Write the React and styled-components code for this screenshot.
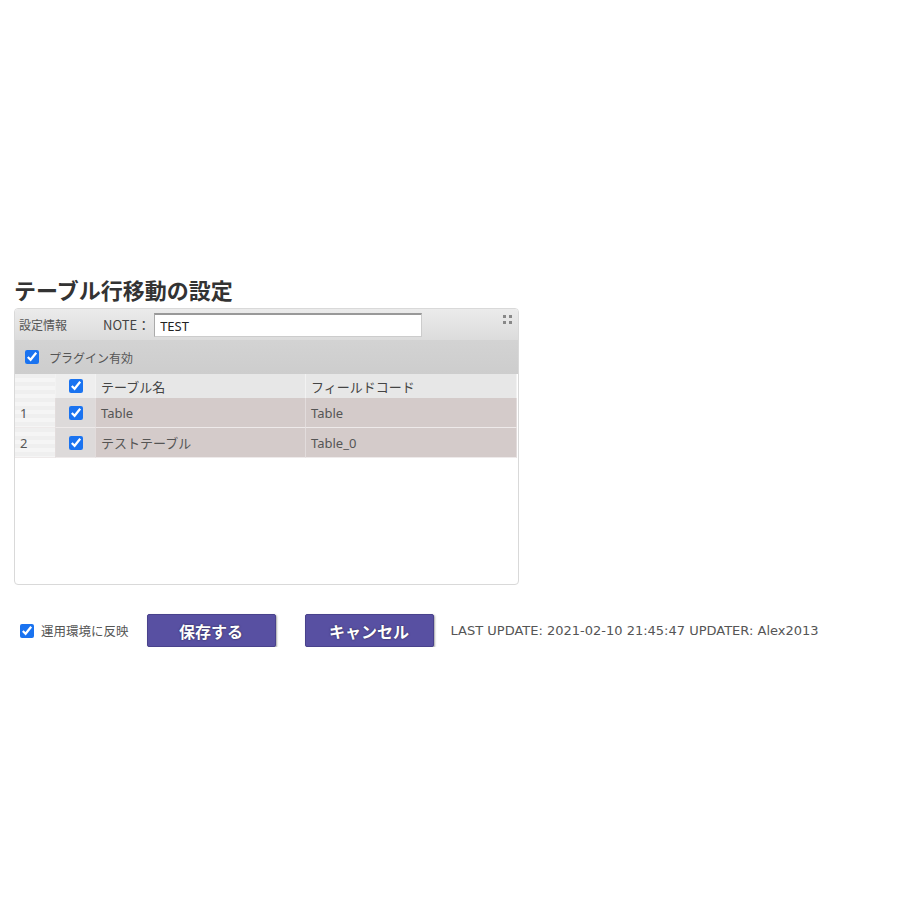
import React from "react";
import styled, { createGlobalStyle } from "styled-components";

const Global = createGlobalStyle`
  html, body { margin: 0; padding: 0; background: #fff; }
  body { font-family: "Noto Sans", "Noto Sans CJK JP", sans-serif; color: #444; }
`;

const Page = styled.div`
  padding: 276px 14px 0 14px;
`;

const Title = styled.h1`
  margin: 0;
  height: 32px;
  line-height: 26px;
  font-size: 22px;
  font-weight: 700;
  color: #333;
  font-family: "Noto Sans CJK JP", sans-serif;
`;

const Panel = styled.div`
  position: relative;
  width: 503px;
  height: 275px;
  border: 1px solid #d9d9d9;
  border-radius: 4px;
  overflow: hidden;
  background: #fff;
`;

const HeaderBar = styled.div`
  display: flex;
  align-items: center;
  height: 31px;
  padding-left: 4px;
  background: linear-gradient(#ebebeb, #dcdcdc);
  font-family: "Noto Sans CJK JP", sans-serif;
`;

const SmallLabel = styled.span`
  font-size: 12px;
  color: #555;
  width: ${p => p.$w || "auto"};
`;

const NoteLabel = styled.span`
  font-size: 13px;
  color: #444;
  margin-right: 4px;
`;

const NoteInput = styled.input`
  box-sizing: border-box;
  width: 268px;
  height: 24px;
  margin-top: 1px;
  border: 1px solid #ccc;
  border-top: 2px solid #999;
  border-left: 1px solid #aaa;
  padding: 0 5px;
  font-size: 13px;
  color: #222;
  font-family: "Noto Sans", sans-serif;
  outline: none;
  background: #fff;
`;

const ExpandIcon = styled.svg`
  position: absolute;
  top: 6px;
  right: 6px;
`;

const PluginRow = styled.label`
  display: flex;
  align-items: center;
  gap: 10px;
  height: 34px;
  padding-left: 10px;
  background: linear-gradient(#d3d3d3, #cdcdcd);
  font-family: "Noto Sans CJK JP", sans-serif;
  font-size: 12px;
  color: #555;
`;

const Check = styled.input.attrs({ type: "checkbox" })`
  width: 14px;
  height: 14px;
  margin: 0;
  accent-color: #1a73f0;
`;

const Grid = styled.div`
  display: grid;
  grid-template-columns: 41px 40px 210px 211px;
  font-size: 13px;
  color: #555;
  font-family: "Noto Sans", "Noto Sans CJK JP", sans-serif;
`;

const Cell = styled.div`
  display: flex;
  align-items: center;
  justify-content: ${p => (p.$center ? "center" : "flex-start")};
  height: ${p => (p.$head ? "24px" : "30px")};
  padding-left: ${p => (p.$center ? "0" : "5px")};
  box-sizing: border-box;
  border-right: 1px solid ${p => (p.$head ? "#f2f2f2" : "#e2dcdc")};
  border-bottom: ${p => (p.$head ? "0" : "1px solid #eeeaea")};
  background: ${p =>
    p.$kind === "idx"
      ? "repeating-linear-gradient(#efefef 0 4px, #f5f5f5 4px 8px)"
      : p.$kind === "chk"
      ? p.$head ? "#eeeeee" : "#dddada"
      : p.$head ? "#e7e7e7" : "#d4cbca"};
  color: ${p => (p.$head ? "#444" : "#555")};
  font-family: ${p => (p.$head ? `"Noto Sans CJK JP", sans-serif` : "inherit")};
`;

const Footer = styled.div`
  display: flex;
  align-items: center;
  margin-top: 29px;
  padding-left: 6px;
  height: 33px;
`;

const FooterCheck = styled.label`
  display: flex;
  align-items: center;
  gap: 7px;
  font-size: 12.5px;
  color: #555;
  font-family: "Noto Sans CJK JP", sans-serif;
  margin-right: 18px;
`;

const Button = styled.button`
  width: 129px;
  height: 33px;
  margin-right: ${p => p.$mr || "0"};
  border: 1px solid #49428c;
  border-radius: 2px;
  background: #5850a2;
  box-shadow: 1px 1px 2px rgba(0, 0, 0, 0.35);
  color: #fff;
  font-size: 16px;
  font-weight: 700;
  font-family: "Noto Sans CJK JP", sans-serif;
  text-shadow: 0 0 2px rgba(0, 0, 0, 0.6);
  cursor: pointer;
  padding: 0;
`;

const UpdateText = styled.span`
  font-size: 13px;
  color: #555;
  font-family: "DejaVu Sans", sans-serif;
`;

const rows = [
  { no: "1", name: "Table", code: "Table" },
  { no: "2", name: "テストテーブル", code: "Table_0" },
];

export default function App() {
  return (
    <>
      <Global />
      <Page>
        <Title>テーブル行移動の設定</Title>
        <Panel>
          <HeaderBar>
            <SmallLabel $w="84px">設定情報</SmallLabel>
            <NoteLabel>NOTE：</NoteLabel>
            <NoteInput defaultValue="TEST" />
          </HeaderBar>
          <ExpandIcon width="9" height="9" viewBox="0 0 9 9">
            <rect x="0" y="0" width="3" height="3" fill="#888" />
            <rect x="6" y="0" width="3" height="3" fill="#888" />
            <rect x="0" y="6" width="3" height="3" fill="#888" />
            <rect x="6" y="6" width="3" height="3" fill="#888" />
          </ExpandIcon>
          <PluginRow>
            <Check defaultChecked />
            プラグイン有効
          </PluginRow>
          <Grid>
            <Cell $head $kind="idx" />
            <Cell $head $kind="chk" $center>
              <Check defaultChecked />
            </Cell>
            <Cell $head>テーブル名</Cell>
            <Cell $head>フィールドコード</Cell>
            {rows.map(r => (
              <React.Fragment key={r.no}>
                <Cell $kind="idx">{r.no}</Cell>
                <Cell $kind="chk" $center>
                  <Check defaultChecked />
                </Cell>
                <Cell>{r.name}</Cell>
                <Cell>{r.code}</Cell>
              </React.Fragment>
            ))}
          </Grid>
        </Panel>
        <Footer>
          <FooterCheck>
            <Check defaultChecked />
            運用環境に反映
          </FooterCheck>
          <Button $mr="29px">保存する</Button>
          <Button $mr="17px">キャンセル</Button>
          <UpdateText>LAST UPDATE: 2021-02-10 21:45:47 UPDATER: Alex2013</UpdateText>
        </Footer>
      </Page>
    </>
  );
}
